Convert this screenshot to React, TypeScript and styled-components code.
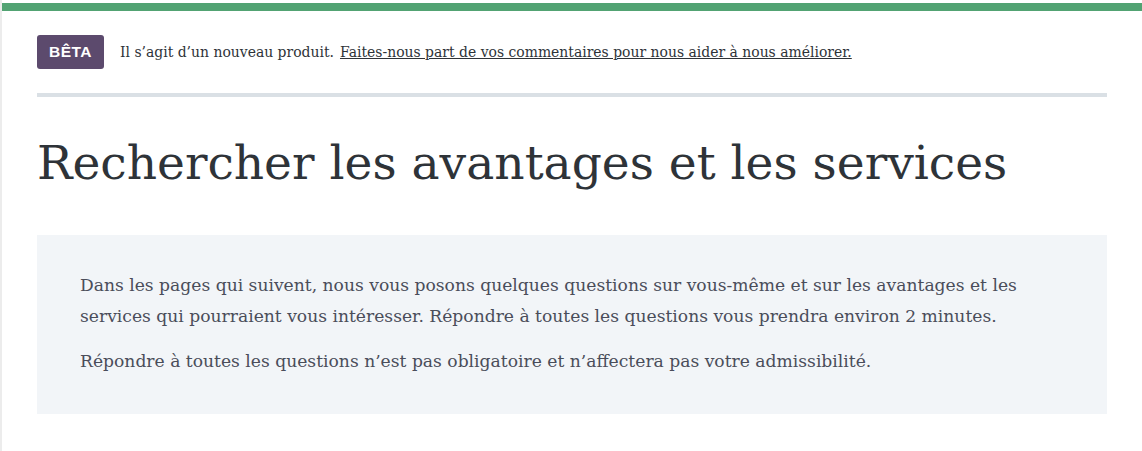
import React from "react";
import styled, { createGlobalStyle } from "styled-components";

const Global = createGlobalStyle`
  html, body { margin: 0; padding: 0; background: #fff; }
  body { font-family: "DejaVu Serif", serif; }
`;

const Page = styled.div`
  width: 1142px;
  height: 451px;
  box-sizing: border-box;
  border-left: 2px solid #ececec;
  padding-top: 3px;
  overflow: hidden;
`;

const TopBar = styled.div`
  height: 8px;
  background: #52a373;
`;

const Main = styled.main`
  padding: 0 35px 0 35px;
`;

const Notice = styled.div`
  display: flex;
  align-items: center;
  gap: 16px;
  padding: 24px 0 24px;
  border-bottom: 4px solid #dae0e5;
`;

const Badge = styled.span`
  display: inline-flex;
  align-items: center;
  justify-content: center;
  width: 67px;
  height: 34px;
  border-radius: 3px;
  background: #5c4a6d;
  color: #fff;
  font-family: "Liberation Sans", Arial, sans-serif;
  font-weight: 700;
  font-size: 15.5px;
  letter-spacing: 0.5px;
`;

const NoticeText = styled.p`
  margin: 0;
  font-size: 13.95px;
  color: #2e3338;
`;

const FeedbackLink = styled.a`
  color: #2e3338;
  text-decoration: underline;
  margin-left: 6px;
`;

const Title = styled.h1`
  margin: 38px 0 44px;
  font-weight: 400;
  font-size: 47.1px;
  line-height: 56px;
  color: #2e3338;
  white-space: nowrap;
`;

const Intro = styled.section`
  background: #f2f5f8;
  padding: 35px 43px 37px;
`;

const Para = styled.p`
  margin: 0 0 14px;
  font-size: 17.15px;
  line-height: 31px;
  color: #4a4d5a;
  &:last-child { margin-bottom: 0; }
`;

export default function App() {
  return (
    <>
      <Global />
      <Page>
        <TopBar />
        <Main>
          <Notice>
            <Badge>BÊTA</Badge>
            <NoticeText>
              Il s’agit d’un nouveau produit.
              <FeedbackLink href="#">Faites-nous part de vos commentaires pour nous aider à nous améliorer.</FeedbackLink>
            </NoticeText>
          </Notice>
          <Title>Rechercher les avantages et les services</Title>
          <Intro>
            <Para>
              Dans les pages qui suivent, nous vous posons quelques questions sur vous-même et sur les avantages et les
              <br />
              services qui pourraient vous intéresser. Répondre à toutes les questions vous prendra environ 2 minutes.
            </Para>
            <Para>Répondre à toutes les questions n’est pas obligatoire et n’affectera pas votre admissibilité.</Para>
          </Intro>
        </Main>
      </Page>
    </>
  );
}
